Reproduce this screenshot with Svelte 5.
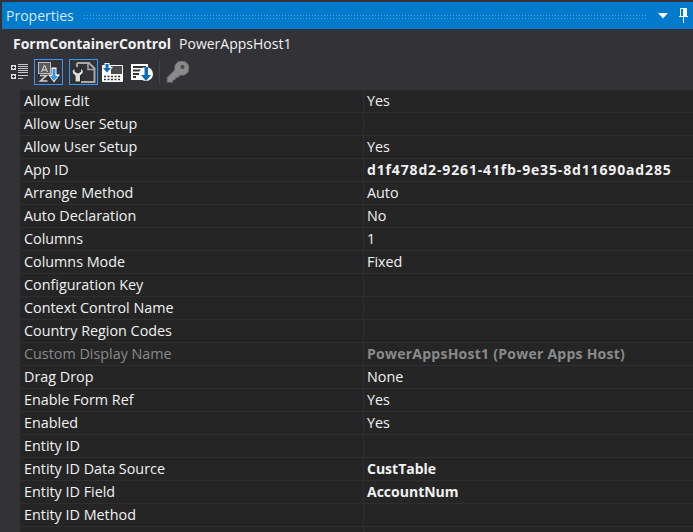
<script>
  // name, value, bold value, greyed out
  const rows = [
    { name: 'Allow Edit', value: 'Yes' },
    { name: 'Allow User Setup', value: '' },
    { name: 'Allow User Setup', value: 'Yes' },
    { name: 'App ID', value: 'd1f478d2-9261-41fb-9e35-8d11690ad285', bold: true, guid: true },
    { name: 'Arrange Method', value: 'Auto' },
    { name: 'Auto Declaration', value: 'No' },
    { name: 'Columns', value: '1' },
    { name: 'Columns Mode', value: 'Fixed' },
    { name: 'Configuration Key', value: '' },
    { name: 'Context Control Name', value: '' },
    { name: 'Country Region Codes', value: '' },
    { name: 'Custom Display Name', value: 'PowerAppsHost1 (Power Apps Host)', bold: true, muted: true },
    { name: 'Drag Drop', value: 'None' },
    { name: 'Enable Form Ref', value: 'Yes' },
    { name: 'Enabled', value: 'Yes' },
    { name: 'Entity ID', value: '' },
    { name: 'Entity ID Data Source', value: 'CustTable', bold: true },
    { name: 'Entity ID Field', value: 'AccountNum', bold: true },
    { name: 'Entity ID Method', value: '' }
  ];
</script>

<div class="panel">
  <header class="title">
    <span class="title-text">Properties</span>
    <span class="grip"></span>
    <svg class="drop" width="10" height="6" viewBox="0 0 10 6"><path d="M0 0h10L5 5.500z" fill="#fff" /></svg>
    <svg class="pin" width="9" height="15" viewBox="0 0 9 15">
      <path d="M1.500 .5h6M1.500 .5v8h6v-8M0 8.500h9M4.500 9v6" fill="none" stroke="#fff" />
      <rect x="4" y="1" width="3" height="7" fill="#fff" />
    </svg>
  </header>

  <div class="object">
    <span class="object-type">FormContainerControl</span>
    <span class="object-name">PowerAppsHost1</span>
  </div>

  <div class="toolbar">
    <button class="tool" aria-label="Categorized">
      <svg width="18" height="16" viewBox="0 0 18 16">
        <rect x="0" y="1" width="5" height="5" fill="#ddd" /><path d="M1 3.500h3M2.500 2v3" stroke="#222" />
        <rect x="0" y="10" width="5" height="5" fill="#ddd" /><path d="M1 12.500h3M2.500 11v3" stroke="#222" />
        <path d="M7 .5h10M7 2.500h10M7 4.500h10M7 6.500h10M7 8.500h10M7 11.500h10M7 14.500h5" stroke="#c8c8c8" />
      </svg>
    </button>
    <button class="tool active" aria-label="Alphabetical">
      <svg width="23" height="21" viewBox="0 0 23 21">
        <rect x="1.500" y=".5" width="12" height="11" fill="#5a5a5a" stroke="#bdbdbd" />
        <path d="M4.500 10l3-7 3 7M5.500 8h4" fill="none" stroke="#e0e0e0" />
        <path d="M3 13.500h6.500L3.500 19h7" fill="none" stroke="#cfcfcf" stroke-width="1.600" />
        <path d="M14.500 5.500h5v7H23l-6 8-6-8h3.500z" fill="#fff" />
        <path d="M15.500 7h3v7h2.500l-4 5-4-5h2.500z" fill="#2f96e8" />
      </svg>
    </button>
    <span class="gap"></span>
    <button class="tool active" aria-label="Properties">
      <svg width="24" height="21" viewBox="0 0 24 21">
        <path d="M5 1h12l5.500 5.500V20H9" fill="none" stroke="#a8a8a8" stroke-width="2" />
        <path d="M16 1v6.500h6.500" fill="none" stroke="#a8a8a8" stroke-width="1.500" />
        <path d="M5 1v4" stroke="#a8a8a8" stroke-width="2" />
        <path d="M3 6a4.500 4.500 0 0 0-2.500 5.500L3 13.500V20h5.500v-6.500l2.500-2A4.500 4.500 0 0 0 8.500 6v3.500L6 11 3 9.500z" fill="#dcdcdc" stroke="#1f1f20" />
      </svg>
    </button>
    <button class="tool" aria-label="Events">
      <svg width="21" height="19" viewBox="0 0 21 19">
        <rect x="0" y="2" width="21" height="17" rx="1" fill="#fff" />
        <rect x="9" y="3" width="11" height="8" fill="#4c4c4c" />
        <path d="M2 13.500h17M2 16.500h17" stroke="#333" stroke-dasharray="2 1.500" stroke-width="1.500" />
        <path d="M2.500 0h5v4H11l-6 7-6-7h3.500z" fill="#fff" />
        <path d="M3.500 1h3v4h2.500l-4 4.500L1 5h2.500z" fill="#0f6cbd" />
      </svg>
    </button>
    <button class="tool" aria-label="Sort">
      <svg width="22" height="19" viewBox="0 0 22 19">
        <rect x="0" y="1" width="17" height="16" fill="#fff" />
        <path d="M2 4h13M2 7.500h9M2 11h6M2 14h3" stroke="#333" stroke-width="2" />
        <circle cx="15" cy="11" r="7" fill="#fff" />
        <path d="M13.500 4h3.500v8h3l-5 6-5-6h3.500z" fill="#0f6cbd" />
      </svg>
    </button>
    <span class="sep"></span>
    <button class="tool" aria-label="Property pages">
      <svg width="23" height="22" viewBox="0 0 23 22">
        <path d="M1 16.500l7.500-7.500a7.500 7.500 0 1 1 5.500 5.500L11.500 17H9.500v2H7v2.500H1z" fill="#8a8a8a" stroke="#555" />
        <circle cx="16.500" cy="6" r="2" fill="#4a4a4e" />
      </svg>
    </button>
  </div>

  <div class="grid">
    {#each rows as row}
      <div class="row" class:muted={row.muted}>
        <div class="name">{row.name}</div>
        <div class="value" class:bold={row.bold} class:guid={row.guid}>{row.value}</div>
      </div>
    {/each}
    <div class="row"><div class="name"></div><div class="value"></div></div>
  </div>
</div>

<style>
  :global(body) {
    background: #2d2d30;
  }
  .panel {
    width: 693px;
    height: 532px;
    box-sizing: border-box;
    padding-top: 2px;
    overflow: hidden;
    background: #333337;
    font-family: 'Open Sans', 'Noto Sans', sans-serif;
    font-size: 14.35px;
    color: #f1f1f1;
  }
  .title {
    height: 27px;
    margin-left: 2px;
    display: flex;
    align-items: center;
    background: #007acc;
    padding: 0 5px 0 4px;
  }
  .title-text {
    font-size: 14px;
    color: #d8ebf8;
  }
  .grip {
    flex: 1;
    height: 5px;
    margin: 1px 11px 0 9px;
    background-image: radial-gradient(#59a9e0 0.9px, transparent 1px);
    background-size: 3px 3px;
  }
  .pin {
    margin: 0 0 0 11px;
  }
  .object {
    height: 29px;
    display: flex;
    align-items: center;
    gap: 8px;
    padding-left: 13px;
  }
  .object-type {
    font-size: 14px;
    font-weight: 700;
  }
  .object-name {
    font-size: 14px;
  }
  .toolbar {
    height: 32px;
    box-sizing: border-box;
    display: flex;
    padding: 1px 0 0 5px;
  }
  .tool {
    width: 29px;
    height: 26px;
    padding: 0;
    display: flex;
    align-items: center;
    justify-content: center;
    background: none;
    border: 1px solid transparent;
    box-sizing: border-box;
  }
  .tool.active {
    border-color: #3399ff;
  }
  .gap {
    width: 6px;
  }
  .sep {
    width: 1px;
    height: 24px;
    margin: 1px 3px 0 3px;
    background: #45454a;
  }
  .grid {
    margin-left: 20px;
  }
  .row {
    display: flex;
    height: 23px;
    box-sizing: border-box;
    border-bottom: 1px solid #2f2f32;
    background: #252526;
    line-height: 21px;
  }
  .row.muted {
    color: #8a8a8a;
  }
  .name {
    width: 344px;
    padding-left: 4px;
    border-right: 1px solid #2f2f32;
    box-sizing: border-box;
  }
  .value {
    padding-left: 3px;
  }
  .value.bold {
    font-size: 14px;
    font-weight: 700;
  }
  .value.guid {
    letter-spacing: 0.85px;
  }
  .row.muted .value {
    letter-spacing: 0.25px;
  }
</style>
